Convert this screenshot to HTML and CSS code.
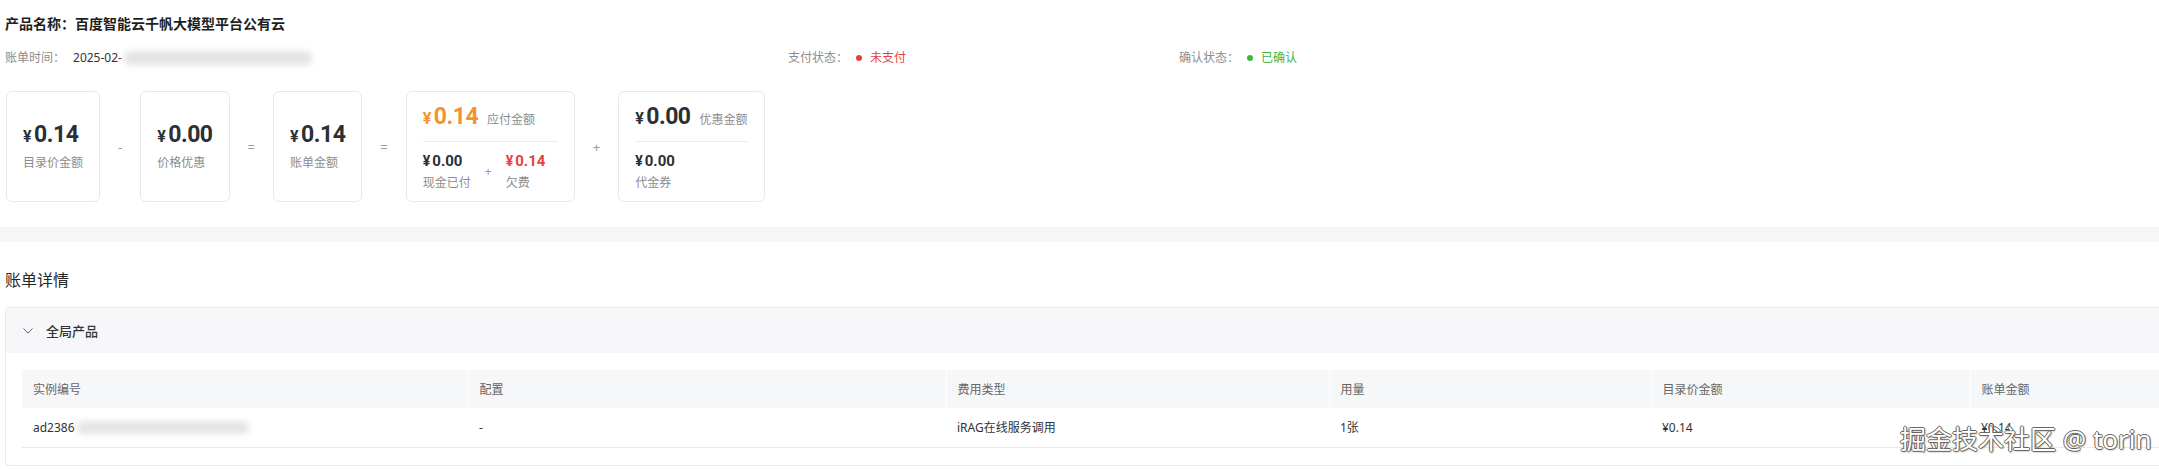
FILE: index.html
```html
<!DOCTYPE html>
<html lang="zh-CN">
<head>
    <meta charset="UTF-8">
    <meta name="viewport" content="width=device-width, initial-scale=1.0">
    <title>账单详情</title>
    <link rel="stylesheet" href="styles.css">
</head>
<body>
    <div class="page">
        <section class="summary">
            <h1 class="product-name">产品名称：百度智能云千帆大模型平台公有云</h1>

            <div class="meta">
                <div class="meta-item">
                    <span class="meta-label">账单时间：</span>
                    <span class="meta-value">2025-02-</span>
                    <span class="blur blur-time"></span>
                </div>
                <div class="meta-item">
                    <span class="meta-label">支付状态：</span>
                    <span class="status status-unpaid">未支付</span>
                </div>
                <div class="meta-item">
                    <span class="meta-label">确认状态：</span>
                    <span class="status status-ok">已确认</span>
                </div>
            </div>

            <div class="formula">
                <div class="card card-simple">
                    <div class="amount"><span class="cur">¥</span>0.14</div>
                    <div class="amount-label">目录价金额</div>
                </div>
                <span class="op">-</span>
                <div class="card card-simple">
                    <div class="amount"><span class="cur">¥</span>0.00</div>
                    <div class="amount-label">价格优惠</div>
                </div>
                <span class="op">=</span>
                <div class="card card-simple">
                    <div class="amount"><span class="cur">¥</span>0.14</div>
                    <div class="amount-label">账单金额</div>
                </div>
                <span class="op">=</span>
                <div class="card card-split card-payable">
                    <div class="split-main">
                        <div class="amount amount-orange"><span class="cur">¥</span>0.14</div>
                        <div class="amount-label">应付金额</div>
                    </div>
                    <div class="split-sub">
                        <div class="sub-item">
                            <div class="sub-amount"><span class="cur">¥</span>0.00</div>
                            <div class="amount-label">现金已付</div>
                        </div>
                        <span class="sub-plus">+</span>
                        <div class="sub-item">
                            <div class="sub-amount sub-red"><span class="cur">¥</span>0.14</div>
                            <div class="amount-label">欠费</div>
                        </div>
                    </div>
                </div>
                <span class="op">+</span>
                <div class="card card-split">
                    <div class="split-main">
                        <div class="amount"><span class="cur">¥</span>0.00</div>
                        <div class="amount-label">优惠金额</div>
                    </div>
                    <div class="split-sub">
                        <div class="sub-item">
                            <div class="sub-amount"><span class="cur">¥</span>0.00</div>
                            <div class="amount-label">代金券</div>
                        </div>
                    </div>
                </div>
            </div>
        </section>

        <div class="band"></div>

        <section class="detail">
            <h2 class="detail-title">账单详情</h2>

            <div class="collapse">
                <div class="collapse-head">
                    <svg class="chevron" viewBox="0 0 10 6" width="10" height="6">
                        <polyline points="0.5,0.5 5,5.2 9.5,0.5" fill="none" stroke="#666" stroke-width="1"/>
                    </svg>
                    <span>全局产品</span>
                </div>
                <div class="collapse-body">
                    <table class="bill-table">
                        <colgroup>
                            <col class="col-id">
                            <col class="col-conf">
                            <col class="col-type">
                            <col class="col-usage">
                            <col class="col-list">
                            <col>
                        </colgroup>
                        <thead>
                            <tr>
                                <th>实例编号</th>
                                <th>配置</th>
                                <th>费用类型</th>
                                <th>用量</th>
                                <th>目录价金额</th>
                                <th>账单金额</th>
                            </tr>
                        </thead>
                        <tbody>
                            <tr>
                                <td><span class="instance-id">ad2386</span><span class="blur blur-id"></span></td>
                                <td>-</td>
                                <td>iRAG在线服务调用</td>
                                <td>1张</td>
                                <td>¥0.14</td>
                                <td>¥0.14</td>
                            </tr>
                        </tbody>
                    </table>
                </div>
            </div>
        </section>

        <div class="watermark">掘金技术社区 @ torin</div>
    </div>
</body>
</html>
```

FILE: styles.css
```css
* {
    margin: 0;
    padding: 0;
    box-sizing: border-box;
    font-family: "Noto Sans", "Noto Sans CJK SC", sans-serif;
}

body {
    background-color: #fff;
    overflow: hidden;
}

.page {
    position: relative;
    width: 2200px;
}

/* top summary */
.summary {
    padding: 14px 0 25px 5px;
}

.product-name {
    font-size: 14px;
    font-weight: 700;
    line-height: 20px;
    color: #1f1f1f;
}

.meta {
    display: grid;
    grid-template-columns: 783px 391px 1fr;
    margin-top: 14px;
    font-size: 12px;
    line-height: 20px;
}

.meta-item {
    display: flex;
    align-items: center;
}

.meta-label {
    color: #8c8c8c;
    margin-right: 8px;
}

.meta-value {
    color: #333;
}

.blur {
    display: inline-block;
    background-color: #e4e4e4;
    border-radius: 6px;
    filter: blur(3px);
}

.blur-time {
    width: 188px;
    height: 14px;
    margin-left: 2px;
}

.status {
    display: flex;
    align-items: center;
}

.status::before {
    content: "";
    width: 6px;
    height: 6px;
    border-radius: 50%;
    background-color: currentColor;
    margin-right: 8px;
}

.status-unpaid {
    color: #e8403c;
}

.status-ok {
    color: #3fb24a;
}

/* amount formula */
.formula {
    display: flex;
    align-items: center;
    margin-top: 23px;
    padding-left: 1px;
}

.card {
    height: 111px;
    padding: 0 16px;
    border: 1px solid #e8e8e8;
    border-radius: 6px;
}

.card-simple {
    display: flex;
    flex-direction: column;
    justify-content: center;
}

.card-split {
    padding-top: 11px;
}

.card-payable .split-main,
.card-payable .split-sub {
    min-width: 135px;
}

.amount {
    font-family: Roboto, sans-serif;
    font-weight: 700;
    font-size: 23px;
    line-height: 28px;
    letter-spacing: -0.5px;
    color: #2b2f36;
    white-space: nowrap;
}

.amount .cur {
    font-family: Roboto, sans-serif;
    font-size: 16px;
    margin-right: 3px;
}

.amount-orange {
    color: #f5922f;
}

.amount-label {
    margin-top: 3px;
    font-size: 12px;
    line-height: 18px;
    color: #8c8c8c;
    white-space: nowrap;
}

.op {
    margin: 0 18px;
    font-size: 13px;
    color: #999;
}

.split-main {
    display: flex;
    align-items: baseline;
    padding-bottom: 8px;
    border-bottom: 1px solid #ebebeb;
}

.split-main .amount-label {
    margin: 0 0 0 9px;
}

.split-sub {
    display: flex;
    align-items: center;
    margin-top: 9px;
}

.sub-amount {
    font-family: Roboto, sans-serif;
    font-weight: 700;
    font-size: 15px;
    line-height: 20px;
    color: #2b2f36;
    white-space: nowrap;
}

.sub-amount .cur {
    font-family: Roboto, sans-serif;
    font-size: 14px;
    margin-right: 2px;
}

.sub-red {
    color: #e8403c;
}

.sub-plus {
    margin: 0 14px;
    font-size: 12px;
    color: #999;
}

.band {
    height: 15px;
    background-color: #f5f6f8;
}

/* bill detail */
.detail {
    padding: 27px 0 0 5px;
}

.detail-title {
    font-size: 16px;
    font-weight: 400;
    line-height: 22px;
    color: #262626;
}

.collapse {
    width: 2185px;
    margin-top: 16px;
    border: 1px solid #e8e9eb;
    border-radius: 4px;
}

.collapse-head {
    display: flex;
    align-items: center;
    height: 45px;
    padding-left: 17px;
    background-color: #f7f7f9;
    font-size: 13px;
    font-weight: 500;
    color: #333;
}

.chevron {
    margin-right: 13px;
}

.collapse-body {
    padding: 17px 16px;
}

.bill-table {
    width: 100%;
    border-collapse: collapse;
    table-layout: fixed;
    font-size: 12px;
}

.col-id {
    width: 446px;
}

.col-conf {
    width: 478px;
}

.col-type {
    width: 383px;
}

.col-usage {
    width: 322px;
}

.col-list {
    width: 319px;
}

.bill-table th {
    height: 38px;
    padding: 0 11px;
    background-color: #f6f7f9;
    border-left: 1px solid #fff;
    color: #666;
    font-weight: 400;
    text-align: left;
}

.bill-table th:first-child {
    border-left: none;
}

.bill-table td {
    height: 39px;
    padding: 0 11px;
    border-bottom: 1px solid #e8e9eb;
    color: #333;
    white-space: nowrap;
}

.instance-id {
    vertical-align: middle;
}

.blur-id {
    width: 172px;
    height: 13px;
    margin-left: 2px;
    vertical-align: middle;
}

.watermark {
    position: absolute;
    left: 1900px;
    top: 422px;
    font-size: 26px;
    line-height: 34px;
    color: #fff;
    white-space: nowrap;
    text-shadow: 1px 0 0 #666, -1px 0 0 #666, 0 1px 0 #666, 0 -1px 0 #666, 1px 1px 2px #888;
}
```
